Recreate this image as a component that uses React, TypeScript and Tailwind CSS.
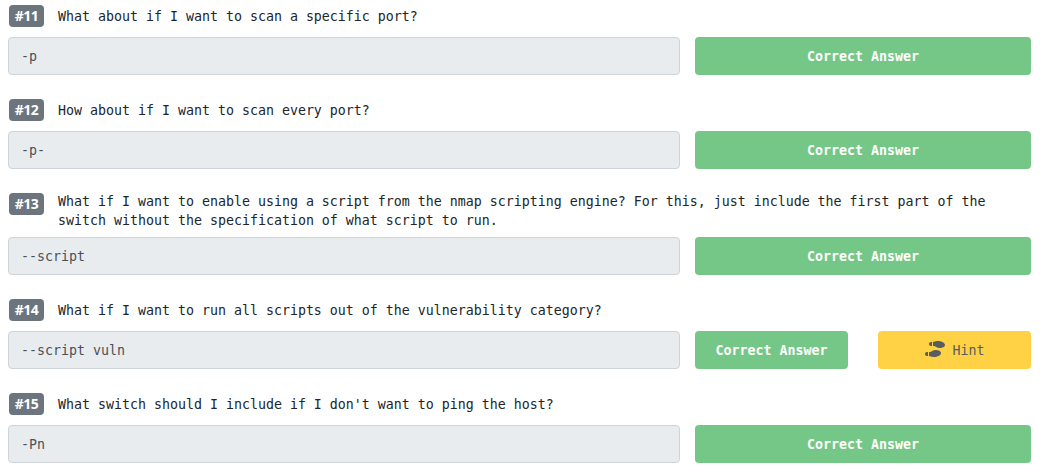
import React from "react";
import { FaShoePrints } from "react-icons/fa";

type Question = { id: number; lines: string[]; answer: string; hint?: boolean };

const questions: Question[] = [
  { id: 11, lines: ["What about if I want to scan a specific port?"], answer: "-p" },
  { id: 12, lines: ["How about if I want to scan every port?"], answer: "-p-" },
  {
    id: 13,
    lines: [
      "What if I want to enable using a script from the nmap scripting engine? For this, just include the first part of the",
      "switch without the specification of what script to run.",
    ],
    answer: "--script",
  },
  { id: 14, lines: ["What if I want to run all scripts out of the vulnerability category?"], answer: "--script vuln", hint: true },
  { id: 15, lines: ["What switch should I include if I don't want to ping the host?"], answer: "-Pn" },
];

function QuestionRow({ id, lines, answer, hint }: Question) {
  const multi = lines.length > 1;
  return (
    <section className="mb-6">
      <div className={multi ? "flex h-11 items-start" : "flex h-8 items-start"}>
        <span className="ml-px flex h-[22px] w-[35px] shrink-0 items-center justify-center rounded bg-[#6c757d] font-['Noto_Sans',sans-serif] text-[14px] leading-[22px] font-bold tracking-[-0.6px] text-white">
          #{id}
        </span>
        <div className={multi ? "-mt-px ml-3.5 leading-[19px]" : "ml-3.5 leading-[24px]"}>
          {lines.map((line) => (
            <p key={line} className="whitespace-pre">{line}</p>
          ))}
        </div>
      </div>
      <div className="flex gap-[15px]">
        <input
          readOnly
          value={answer}
          className="h-[38px] w-[672px] rounded border border-[#ced4da] bg-[#e9ecef] px-3 text-[#495057] outline-none"
        />
        <div className="flex w-[336px] gap-[30px]">
          <button className="h-[38px] flex-1 rounded bg-[#74c787] pt-0.5 font-bold text-white">Correct Answer</button>
          {hint && (
            <button className="flex h-[38px] flex-1 items-center justify-center gap-2 rounded bg-[#ffd145] text-[#585d62]">
              <FaShoePrints className="mb-0.5 h-4 w-5" />
              <span className="pt-0.5">Hint</span>
            </button>
          )}
        </div>
      </div>
    </section>
  );
}

export default function App() {
  return (
    <main className="h-[472px] w-[1043px] overflow-hidden bg-white pt-[5px] pl-2 font-['DejaVu_Sans_Mono',monospace] text-[13.29px] text-[#212529]">
      {questions.map((q) => (
        <QuestionRow key={q.id} {...q} />
      ))}
    </main>
  );
}
